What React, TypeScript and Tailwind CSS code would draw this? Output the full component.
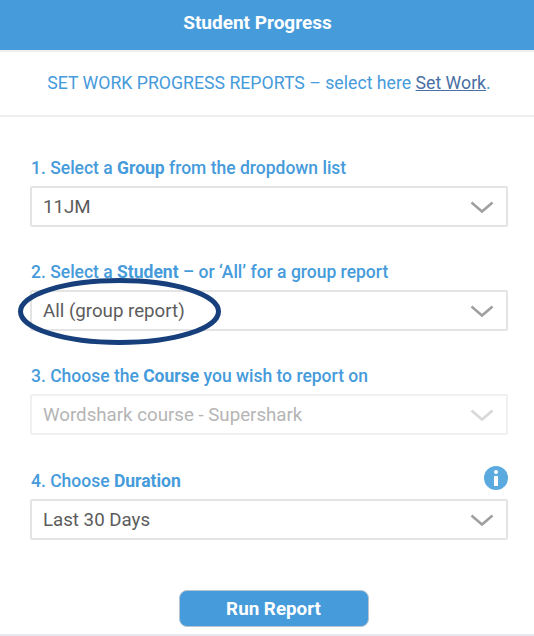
import React from 'react';

const Chevron = ({ muted }: { muted?: boolean }) => (
  <svg width="24" height="13" viewBox="0 0 24 13" fill="none" className={`absolute right-[12px] top-[13px] ${muted ? 'opacity-40' : ''}`}>
    <path d="M1.5 1.5 L12 10.5 L22.5 1.5" stroke="#a0a0a0" strokeWidth="2.6" />
  </svg>
);

const Field = ({ value, disabled }: { value: string; disabled?: boolean }) => (
  <div className={`relative h-[41px] mt-[5px] pt-[1px] flex items-center pl-[11px] border-2 rounded-[2px] text-[18.7px] bg-white ${disabled ? 'border-[#f0f0f0] text-[#b5b5b5]' : 'border-[#e4e4e4] text-[#5c5c5c]'}`}>
    {value}
    <Chevron muted={disabled} />
  </div>
);

const Label = ({ before, bold, after }: { before: string; bold: string; after: string }) => (
  <div className="h-[25px] pl-[1px] leading-[24px] text-[17.5px] text-[#469bdb] font-medium">
    {before}<span className="font-bold">{bold}</span>{after}
  </div>
);

export default function App() {
  return (
    <div className="relative w-[534px] h-[636px] bg-white overflow-hidden font-['Roboto',sans-serif]">
      <div className="h-[50px] pb-[4px] pr-[19px] bg-[#469bdb] flex items-center justify-center text-white text-[19px] font-bold">
        Student Progress
      </div>
      <div className="h-[67px] pl-[4px] border-y-2 border-[#eeeeee] flex items-center justify-center text-[#469bdb] text-[17.7px]">
        <span>
          SET WORK PROGRESS REPORTS – select here{' '}
          <span className="text-[#4a6fa5] underline">Set Work</span>.
        </span>
      </div>

      <div className="pl-[30px] pr-[26px] pt-[39px] flex flex-col">
        <Label before="1. Select a " bold="Group" after=" from the dropdown list" />
        <Field value="11JM" />

        <div className="mt-[33px]">
          <Label before="2. Select a " bold="Student" after=" – or ‘All’ for a group report" />
          <Field value="All (group report)" />
        </div>

        <div className="mt-[33px]">
          <Label before="3. Choose the " bold="Course" after=" you wish to report on" />
          <Field value="Wordshark course - Supershark" disabled />
        </div>

        <div className="mt-[34px]">
          <div className="flex items-start justify-between">
            <Label before="4. Choose " bold="Duration" after="" />
            <div className="w-[24px] h-[24px] -mt-[3px] rounded-full bg-[#5aaae0] flex flex-col items-center justify-center gap-[2px]">
              <div className="w-[4px] h-[4px] rounded-full bg-white" />
              <div className="w-[4px] h-[10px] bg-white" />
            </div>
          </div>
          <Field value="Last 30 Days" />
        </div>

        <div className="mt-[50px] pl-[9px] flex justify-center">
          <button className="w-[190px] h-[37px] pt-[1px] rounded-[8px] bg-[#469bdb] border border-[#b5c4d0] text-white text-[18.8px] font-bold">
            Run Report
          </button>
        </div>
      </div>

      <div className="absolute left-0 right-0 bottom-0 h-[2px] bg-[#e6eaee]" />

      {/* hand-drawn highlight over the second dropdown */}
      <svg width="210" height="72" viewBox="0 0 210 72" fill="none" className="absolute left-[15px] top-[276px]">
        <ellipse cx="104.5" cy="35.5" rx="99" ry="31" stroke="#163f7c" strokeWidth="5" />
      </svg>
    </div>
  );
}
